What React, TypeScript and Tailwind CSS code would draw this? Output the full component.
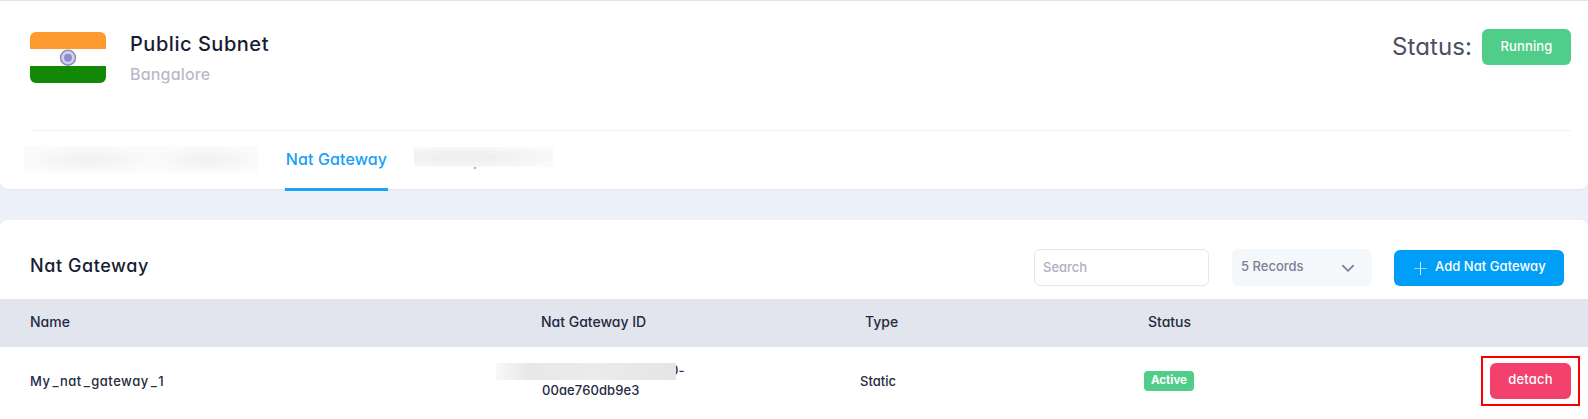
function Flag() {
  return (
    <svg className="mt-[31px] ml-[30px] h-[51px] w-[76px] shrink-0 rounded-[6px]" viewBox="0 0 76 51">
      <rect width="76" height="17" fill="#fd9b30" />
      <rect y="17" width="76" height="17" fill="#fffefc" />
      <rect y="34" width="76" height="17" fill="#128807" />
      <circle cx="38" cy="25.7" r="7.4" fill="#d3d3f0" stroke="#8f8fba" strokeWidth="1.6" />
      <circle cx="38" cy="25.7" r="4" fill="#8d8dd0" />
    </svg>
  );
}

function SubnetCard() {
  return (
    <section className="h-[189px] rounded-b-[8px] border-t border-[#e4e4e6] bg-white shadow-[0_1px_2px_#dfe3ee]">
      <div className="flex h-[129px] items-start">
        <Flag />
        <div className="ml-6 pt-[28px]">
          <h1 className="text-[20px] leading-[30px] font-medium tracking-[0.53px] text-[#181c32]">Public Subnet</h1>
          <p className="mt-[3px] text-[16px] leading-6 font-medium tracking-[0.18px] text-[#b9bac8]">Bangalore</p>
        </div>
        <div className="mt-7 mr-[17px] ml-auto flex h-9 items-center">
          <span className="text-[24px] leading-9 tracking-[0.1px] text-[#4a4f63]">Status:</span>
          <span className="ml-[10px] flex h-9 w-[89px] justify-center rounded-[6px] bg-[#50cd89] text-[13px] leading-[34px] font-medium tracking-[0.15px] text-white">
            Running
          </span>
        </div>
      </div>
      <nav className="mr-[17px] ml-[30px] flex h-[61px] border-t border-[#f1f2f4]">
        <div className="mt-[15px] -ml-[6px] flex h-[27px] w-[234px]">
          <div className="w-[130px] bg-[radial-gradient(ellipse_at_center,#f1f2f4_10%,#fbfbfc_75%)]" />
          <div className="w-[104px] bg-[radial-gradient(ellipse_at_center,#f1f2f4_10%,#fbfbfc_75%)]" />
        </div>
        <a className="ml-[27px] h-[60px] w-[103px] border-b-[3px] border-[#18a5f6] text-center text-[16px] leading-[57px] font-medium tracking-[0.12px] whitespace-nowrap text-[#18a0f5]">
          Nat Gateway
        </a>
        <div className="mt-4 ml-[26px] w-[139px]">
          <div className="h-5 bg-[radial-gradient(ellipse_at_35%_50%,#efeff1_20%,#fafafa_85%)]" />
          <div className="ml-[60px] h-[2px] w-[2px] -skew-x-12 bg-[#a9abc0]" />
        </div>
      </nav>
    </section>
  );
}

function Toolbar() {
  return (
    <div className="flex h-[79px] items-start pl-[30px]">
      <h2 className="mt-[32px] text-[18px] leading-7 font-medium tracking-[0.58px] text-[#181c32]">Nat Gateway</h2>
      <input
        placeholder="Search"
        className="mt-[29px] mr-[23px] ml-auto h-[37px] w-[175px] rounded-[6px] border border-[#e6e6f0] bg-white px-2 pb-[2px] text-[13px] font-medium outline-none placeholder:text-[#adb0c2]"
      />
      <button className="mt-[29px] flex h-[37px] w-[140px] items-center rounded-[6px] bg-[#f4f8fa] pr-[17px] pb-[2px] pl-[9px] text-[13px] font-medium text-[#7c7f95]">
        5 Records
        <svg className="mt-[3px] ml-auto h-[9px] w-[14px]" viewBox="0 0 14 9" fill="none" stroke="#7e8299" strokeWidth="1.8" strokeLinecap="round" strokeLinejoin="round">
          <path d="M1.8 1.6 7 6.8 12.2 1.6" />
        </svg>
      </button>
      <button className="mt-[30px] mr-[24px] ml-[22px] flex h-9 w-[170px] items-center rounded-[6px] bg-[#009ef7] pb-[2px] pl-5 text-[13px] font-medium tracking-[0.05px] whitespace-nowrap text-white">
        <svg className="mt-[2px] mr-2 h-[13px] w-[13px]" viewBox="0 0 13 13" fill="none" stroke="#fff" strokeWidth="1">
          <path d="M6.5 0v13" opacity=".85" />
          <path d="M0 6.5h13" opacity=".55" />
        </svg>
        Add Nat Gateway
      </button>
    </div>
  );
}

function Underscore() {
  return <span className="pr-px pl-[2px]">_</span>;
}

function GatewayTable() {
  return (
    <div className="text-[13px] font-medium text-[#252a41]">
      <div className="grid h-[48px] grid-cols-[541px_324px_283px_1fr] bg-[#e2e5ee] text-[14px] leading-[45px]">
        <span className="pl-[30px]">Name</span>
        <span>Nat Gateway ID</span>
        <span>Type</span>
        <span>Status</span>
      </div>
      <div className="grid h-[72px] grid-cols-[496px_364px_284px_337px_99px] items-start">
        <span className="pt-[24px] pl-[30px] leading-5 tracking-[0.5px]">
          My<Underscore />nat<Underscore />gateway<Underscore />1
        </span>
        <div className="pt-[13px]">
          <div className="flex h-[20px] leading-5">
            <div className="relative mt-[3px] h-[17px] w-[180px] bg-[linear-gradient(90deg,#f8f8f8,#e8e8ea_18%,#ebebed_55%,#e5e5e7)]" />
            <span className="-z-0 -ml-[6px] [clip-path:inset(0_0_0_6px)]">0</span>
            <span>-</span>
          </div>
          <div className="pl-[46px] leading-5 tracking-[0.1px]">00ae760db9e3</div>
        </div>
        <span className="pt-[24px] leading-5">Static</span>
        <span className="mt-[24px] flex h-5 w-[50px] justify-center rounded-[4px] bg-[#50cd89] text-[11.5px] leading-[19px] font-bold text-white">
          Active
        </span>
        <div className="mt-[9px] flex h-[50px] justify-center border-2 border-[#f60000] pt-[5px]">
          <button className="h-9 w-[81px] rounded-[6px] bg-[#f1416c] pb-[2px] text-[13px] font-medium tracking-[0.2px] text-white">detach</button>
        </div>
      </div>
    </div>
  );
}

export default function App() {
  return (
    <main className="h-[419px] overflow-hidden bg-[#ebf0f9] [font-family:Inter,'Liberation_Sans',sans-serif] [font-feature-settings:'cv11']">
      <SubnetCard />
      <section className="mt-[31px] h-[199px] rounded-t-[8px] bg-white">
        <Toolbar />
        <GatewayTable />
      </section>
    </main>
  );
}
